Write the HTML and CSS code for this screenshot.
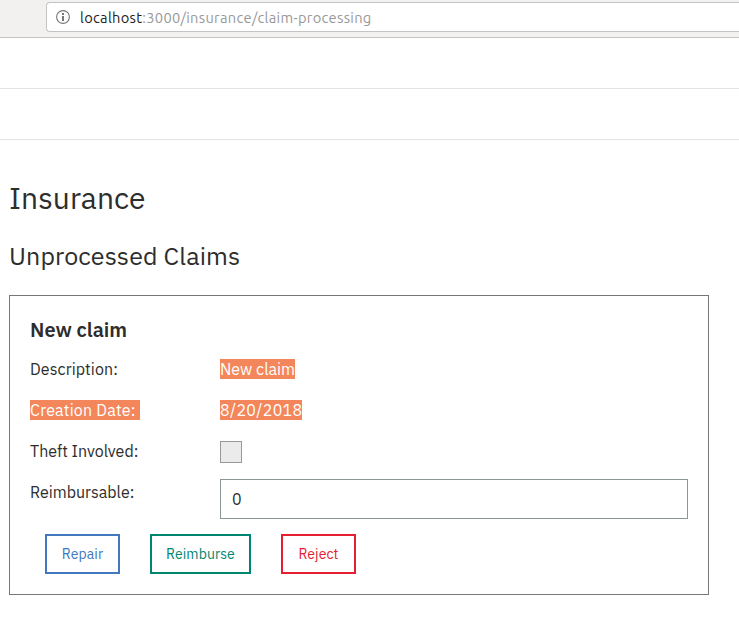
FILE: index.html
```html
<!DOCTYPE html>
<html lang="en">
<head>
<meta charset="utf-8">
<title>Insurance</title>
<link rel="stylesheet" href="styles.css">
</head>
<body>
<header class="toolbar">
  <div class="address">
    <svg class="info" viewBox="0 0 14 14" width="14" height="14"><circle cx="7" cy="7" r="6.4" fill="none" stroke="#777" stroke-width="1.1"/><path d="M6 3h2v2H6zM6 6h2v5H6z" fill="#777"/></svg>
    <span class="url"><span class="host">localhost</span>:3000/insurance/claim-processing</span>
  </div>
</header>
<div class="band"></div>
<div class="band"></div>
<main class="page">
  <h1>Insurance</h1>
  <h2>Unprocessed Claims</h2>
  <section class="card">
    <h3>New claim</h3>
    <div class="row"><span class="label description">Description:</span><span class="marked">New claim</span></div>
    <div class="row"><span class="label"><span class="marked trail">Creation Date:</span></span><span class="marked date">8/20/2018</span></div>
    <div class="row"><span class="label">Theft Involved:</span><span class="check"></span></div>
    <div class="row last"><span class="label">Reimbursable:</span><input class="field" value="0"></div>
    <div class="actions">
      <button class="btn repair">Repair</button>
      <button class="btn reimburse">Reimburse</button>
      <button class="btn reject">Reject</button>
    </div>
  </section>
</main>
</body>
</html>
```

FILE: styles.css
```css
* { box-sizing: border-box; }
body { margin: 0; background: #fff; color: #2d2d2d; font: 16px/20px "IBM Plex Sans", Roboto, sans-serif; overflow: hidden; }
.toolbar { height: 38px; padding: 2px 0 0 46px; background: #f2f1f0; border-bottom: 1px solid #c4c4c4; }
.address { display: flex; align-items: center; height: 30px; padding-left: 9px; background: #fff; border: 1px solid #c4c4c4; border-right: 0; border-radius: 4px 0 0 4px; }
.info { margin-right: 10px; }
.url { padding-top: 1px; font: 14.667px/20px Ubuntu, "Noto Sans", sans-serif; letter-spacing: 0.3px; color: #999; white-space: nowrap; }
.host { color: #222; }
.band { height: 51px; border-bottom: 1px solid #e3e3e3; }
.page { padding: 36px 30px 0 9px; }
h1, h2, h3 { margin: 0; }
h1 { font-weight: 400; font-size: 30px; line-height: 44px; letter-spacing: 0.05px; }
h2 { margin-top: 20px; font-weight: 400; font-size: 25px; line-height: 32px; letter-spacing: 0.12px; }
.card { margin-top: 23px; height: 300px; padding: 23px 20px 0; border: 1px solid #777; }
h3 { font-weight: 600; font-size: 20px; line-height: 22px; }
.row { display: flex; align-items: flex-start; height: 41px; }
h3 + .row { margin-top: 18px; }
.label { flex: 0 0 190px; }
.description { letter-spacing: 0.1px; }
.marked { background: #f3865b; color: #fff; }
.trail { padding-right: 4px; letter-spacing: 0.2px; }
.date { letter-spacing: 0.33px; }
.check { width: 22px; height: 22px; background: #ebebeb; border: 1px solid #999; }
.field { width: 468px; height: 40px; margin-top: -3px; padding: 0 11px; border: 1px solid #8c9696; font: inherit; color: inherit; }
.last { height: 52px; }
.actions { display: flex; gap: 30px; padding-left: 15px; }
.btn { height: 40px; padding: 0; border: 2px solid; background: #fff; font: 14px/18px "IBM Plex Sans", Roboto, sans-serif; letter-spacing: 0.1px; }
.repair { width: 75px; color: #4178be; }
.reimburse { width: 101px; color: #008571; }
.reject { width: 75px; color: #e71d32; }
```
